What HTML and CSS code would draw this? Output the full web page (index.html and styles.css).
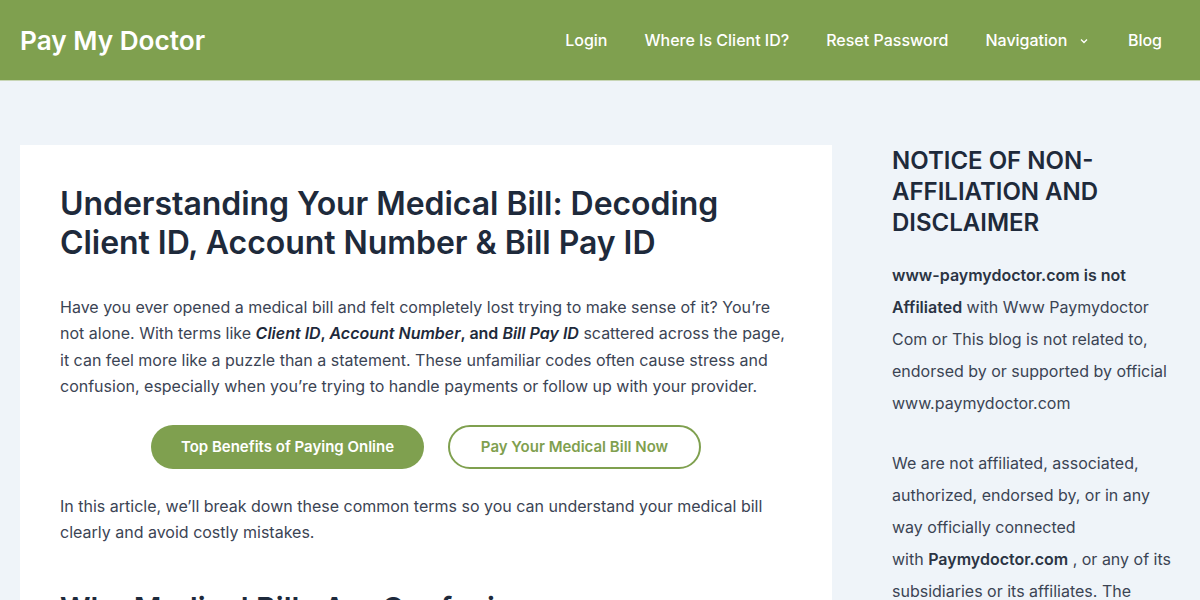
FILE: index.html
```html
<!DOCTYPE html>
<html lang="en">
<head>
<meta charset="utf-8">
<title>Pay My Doctor</title>
<link rel="stylesheet" href="styles.css">
</head>
<body>
<header class="site-header">
  <a class="logo" href="#">Pay My Doctor</a>
  <nav class="nav">
    <a href="#">Login</a>
    <a href="#">Where Is Client ID?</a>
    <a href="#">Reset Password</a>
    <a href="#" class="has-sub">Navigation
      <svg class="chev" width="10" height="10" viewBox="0 0 10 10"><path d="M2 3.5 L5 6.5 L8 3.5" fill="none" stroke="#fff" stroke-width="1.3"/></svg>
    </a>
    <a href="#">Blog</a>
  </nav>
</header>
<div class="page">
  <main class="card">
    <h1>Understanding Your Medical Bill: Decoding Client ID, Account Number &amp; Bill Pay ID</h1>
    <p>Have you ever opened a medical bill and felt completely lost trying to make sense of it? You’re not alone. With terms like <strong><em>Client ID</em>, <em>Account Number</em>, and <em>Bill Pay ID</em></strong> scattered across the page, it can feel more like a puzzle than a statement. These unfamiliar codes often cause stress and confusion, especially when you’re trying to handle payments or follow up with your provider.</p>
    <div class="buttons">
      <a href="#" class="btn btn-fill">Top Benefits of Paying Online</a>
      <a href="#" class="btn btn-outline">Pay Your Medical Bill Now</a>
    </div>
    <p>In this article, we’ll break down these common terms so you can understand your medical bill clearly and avoid costly mistakes.</p>
    <h2>Why Medical Bills Are Confusing</h2>
  </main>
  <aside class="sidebar">
    <h3>NOTICE OF NON-AFFILIATION AND DISCLAIMER</h3>
    <p><strong>www-paymydoctor.com is not Affiliated</strong> with Www Paymydoctor Com or This blog is not related to, endorsed by or supported by official www.paymydoctor.com</p>
    <p>We are not affiliated, associated, authorized, endorsed by, or in any way officially connected<br>with <strong>Paymydoctor.com</strong> , or any of its subsidiaries or its affiliates. The</p>
  </aside>
</div>
</body>
</html>
```

FILE: styles.css
```css
* { box-sizing: border-box; }
html, body { margin: 0; padding: 0; }
body {
  font-family: Inter, "Noto Sans", sans-serif;
  background: #eff4f9;
  color: #3b4454;
  height: 600px;
  overflow: hidden;
}
a { text-decoration: none; color: inherit; }

.site-header {
  height: 81px;
  background: #7fa04f;
  border-bottom: 1px solid #c8d6b6;
  display: flex;
  align-items: center;
  justify-content: space-between;
  padding: 0 20px;
}
.logo {
  color: #fff;
  font-size: 26.2px;
  font-weight: 600;
}
.nav {
  display: flex;
  align-items: center;
  height: 100%;
  padding-right: 18px;
}
.nav a {
  color: #fff;
  font-size: 16px;
  font-weight: 500;
  padding: 0 18.5px;
  display: flex;
  align-items: center;
  gap: 12px;
}
.nav a:last-child { padding-right: 0; }
.nav a.has-sub { padding-right: 20px; }
.chev { margin-top: 1px; }

.page {
  display: flex;
  gap: 60px;
  padding: 64px 20px 0;
}
.card {
  width: 812px;
  flex: none;
  background: #fff;
  padding: 40px 40px 40px;
  min-height: 600px;
}
.card h1 {
  margin: 0 0 32px;
  font-size: 32px;
  line-height: 38.5px;
  font-weight: 600;
  color: #1e2a3b;
  letter-spacing: -0.05px;
}
.card p {
  margin: 0;
  font-size: 16px;
  line-height: 26.4px;
  color: #3b4454;
}
.card p strong { color: #1e2a3b; font-weight: 600; }
.buttons {
  display: flex;
  justify-content: center;
  gap: 24px;
  margin: 25px 0 24px;
}
.btn {
  height: 44px;
  border-radius: 22px;
  display: flex;
  align-items: center;
  justify-content: center;
  font-size: 15px;
  font-weight: 600;
}
.btn-fill {
  background: #7fa04f;
  color: #fff;
  width: 273px;
}
.btn-outline {
  border: 2px solid #7fa04f;
  color: #7fa04f;
  width: 253px;
}
.card h2 {
  margin: 44px 0 0;
  font-size: 30px;
  line-height: 38px;
  font-weight: 600;
  color: #1e2a3b;
}

.sidebar {
  width: 288px;
  flex: none;
}
.sidebar h3 {
  margin: 0 0 21px;
  font-size: 24px;
  line-height: 31px;
  font-weight: 600;
  color: #1e2a3b;
}
.sidebar p {
  margin: 0 0 28px;
  font-size: 16px;
  line-height: 32px;
  color: #3b4454;
}
.sidebar p strong { color: #2b3444; font-weight: 600; }
```
